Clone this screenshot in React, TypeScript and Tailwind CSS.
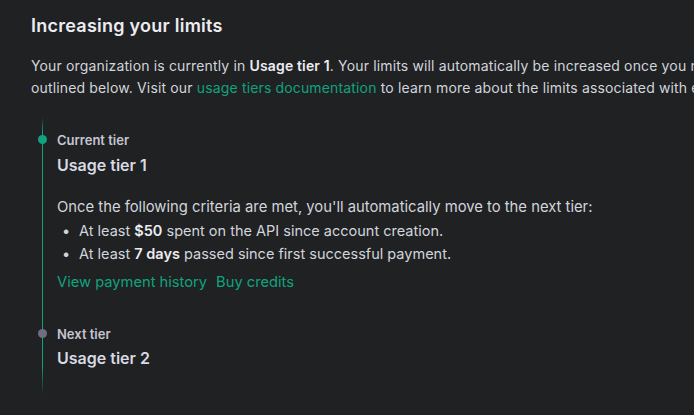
const font = { fontFamily: 'Inter, "Noto Sans", sans-serif' };

const App = () => {
  return (
    <div className="w-[694px] h-[415px] overflow-hidden bg-[#202123] text-[#ececf1]" style={font}>
      <div className="w-[900px] pl-[31px] pt-[14px]">
        <h2 className="text-[18px] leading-[24px] font-semibold tracking-[0.25px] text-[#ececf1]">Increasing your limits</h2>
        <p className="mt-[17px] text-[14px] leading-[22px] tracking-[0.15px] text-[#d1d5db]">
          Your organization is currently in <span className="font-semibold text-[#ececf1]">Usage tier 1</span>. Your limits will automatically be increased once you meet the criteria
          <br />
          outlined below. Visit our <a className="text-[#10a37f]">usage tiers documentation</a> to learn more about the limits associated with each tier.
        </p>

        {/* timeline */}
        <div className="relative mt-[18px] pl-[26px] pt-[14px] pb-[26px]">
          <div className="absolute left-[11px] top-0 bottom-0 w-px flex flex-col">
            <div className="h-[16px] bg-gradient-to-b from-transparent to-[#10a37f]" />
            <div className="grow border-l border-[#10a37f]" />
            <div className="h-[30px] bg-gradient-to-b from-[#10a37f] to-transparent" />
          </div>

          <div className="relative">
            <span className="absolute left-[-19px] top-[4px] w-[9px] h-[9px] rounded-full bg-[#10a37f]" />
            <div className="text-[13px] leading-[18px] font-semibold text-[#c5c5d2]">Current tier</div>
            <div className="mt-[5px] text-[16px] leading-[22px] font-semibold text-[#d9d9e3]">Usage tier 1</div>
            <p className="mt-[20px] text-[14.8px] leading-[22px] text-[#d1d5db]">
              Once the following criteria are met, you'll automatically move to the next tier:
            </p>
            <ul className="mt-[1px] text-[14.5px] leading-[23px] text-[#d1d5db]">
              <li className="flex items-baseline">
                <span className="w-[22px] pl-[5px]">•</span>
                <span>At least <span className="font-semibold text-[#ececf1]">$50</span> spent on the API since account creation.</span>
              </li>
              <li className="flex items-baseline">
                <span className="w-[22px] pl-[5px]">•</span>
                <span>At least <span className="font-semibold text-[#ececf1]">7 days</span> passed since first successful payment.</span>
              </li>
            </ul>
            <div className="mt-[6px] flex gap-[9px] text-[14.7px] leading-[22px] text-[#10a37f]">
              <a>View payment history</a>
              <a>Buy credits</a>
            </div>
          </div>

          <div className="relative mt-[32px]">
            <span className="absolute left-[-19px] top-[4px] w-[9px] h-[9px] rounded-full bg-[#6e6e80]" />
            <div className="text-[13px] leading-[18px] font-semibold text-[#c5c5d2]">Next tier</div>
            <div className="mt-[4px] text-[16px] leading-[22px] font-semibold text-[#d9d9e3]">Usage tier 2</div>
          </div>
        </div>
      </div>
    </div>
  );
};

export default App;
